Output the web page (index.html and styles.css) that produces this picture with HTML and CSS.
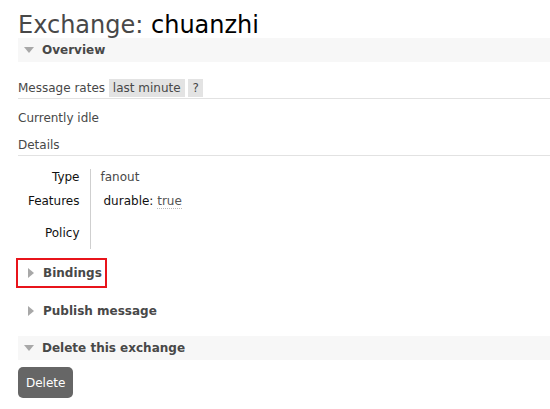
FILE: index.html
```html
<!DOCTYPE html>
<html lang="en">
<head>
    <meta charset="UTF-8">
    <meta name="viewport" content="width=device-width, initial-scale=1.0">
    <title>Exchange: chuanzhi</title>
    <link rel="stylesheet" href="styles.css">
</head>
<body>
    <h1>Exchange: <b>chuanzhi</b></h1>

    <div class="section">
        <h2 class="open">Overview</h2>
        <div class="hider">
            <div class="rates-bar">
                Message rates
                <span class="chip">last minute</span>
                <span class="chip">?</span>
            </div>
            <p class="idle">Currently idle</p>
            <h3>Details</h3>
            <table class="facts">
                <tr class="first">
                    <th>Type</th>
                    <td>fanout</td>
                </tr>
                <tr>
                    <th>Features</th>
                    <td><span class="feature">durable: <abbr>true</abbr></span></td>
                </tr>
                <tr>
                    <th>Policy</th>
                    <td></td>
                </tr>
            </table>
        </div>
    </div>

    <div class="highlight">
        <h2 class="closed">Bindings</h2>
    </div>

    <div class="section">
        <h2 class="closed">Publish message</h2>
    </div>

    <div class="section delete-section">
        <h2 class="open">Delete this exchange</h2>
        <div class="hider">
            <button class="btn">Delete</button>
        </div>
    </div>
</body>
</html>
```

FILE: styles.css
```css
/* Base */
* {
    margin: 0;
    padding: 0;
    box-sizing: border-box;
}
body {
    font-family: "DejaVu Sans", Verdana, sans-serif;
    font-size: 12px;
    line-height: 16px;
    color: #484848;
    background: #fff;
    padding-left: 18px;
    overflow: hidden;
}

/* Title */
h1 {
    font-size: 24px;
    line-height: 26px;
    font-weight: normal;
    margin-top: 12px;
    color: #484848;
}
h1 b {
    font-weight: normal;
    color: #000;
}

/* Section headers */
h2 {
    display: flex;
    align-items: center;
    height: 24px;
    font-size: 12px;
    font-weight: bold;
    color: #484848;
}
h2.open {
    background: #f7f7f7;
    padding-left: 6px;
}
h2.open::before {
    content: '';
    width: 0;
    height: 0;
    border-left: 5.5px solid transparent;
    border-right: 5.5px solid transparent;
    border-top: 6px solid #a8a8a8;
    margin-right: 8px;
}
h2.closed {
    padding-left: 10px;
}
h2.closed::before {
    content: '';
    width: 0;
    height: 0;
    border-top: 5.5px solid transparent;
    border-bottom: 5.5px solid transparent;
    border-left: 6px solid #a8a8a8;
    margin-right: 9px;
}

/* Overview */
.rates-bar {
    margin-top: 17px;
    padding-bottom: 1px;
    line-height: 18px;
    border-bottom: 1px solid #e2e2e2;
}
.chip {
    display: inline-block;
    background: #e3e3e3;
    padding: 0 4px;
    height: 18px;
    line-height: 18px;
}
.idle {
    margin-top: 11px;
}
h3 {
    font-size: 12px;
    font-weight: normal;
    margin-top: 11px;
    padding-bottom: 2px;
    border-bottom: 1px solid #e2e2e2;
}

/* Facts table */
.facts {
    border-collapse: collapse;
    margin-top: 13px;
}
.facts th {
    width: 72px;
    padding-right: 10px;
    text-align: right;
    font-weight: normal;
    color: #111;
    height: 32px;
}
.facts td {
    border-left: 1px solid #cfcfcf;
    padding-left: 10px;
    height: 32px;
}
.facts tr.first th,
.facts tr.first td {
    height: 16px;
}
.feature {
    padding-left: 3px;
    color: #111;
}
abbr {
    color: #555;
    text-decoration: none;
    border-bottom: 1px dotted #bbb;
}

/* Bindings (highlighted) */
.highlight {
    width: fit-content;
    margin-top: 9px;
    margin-left: -2px;
    border: 2px solid #e8141b;
    padding-right: 3px;
}
.highlight h2 {
    height: 26px;
}

.section + .section {
    margin-top: 11px;
}
.highlight + .section {
    margin-top: 11px;
}
.section.delete-section {
    margin-top: 13px;
}

/* Button */
.btn {
    margin-top: 7px;
    background: #666;
    color: #fff;
    border: none;
    border-radius: 5px;
    font-family: inherit;
    font-size: 12px;
    height: 31px;
    padding: 0 8px;
    cursor: pointer;
}
```
